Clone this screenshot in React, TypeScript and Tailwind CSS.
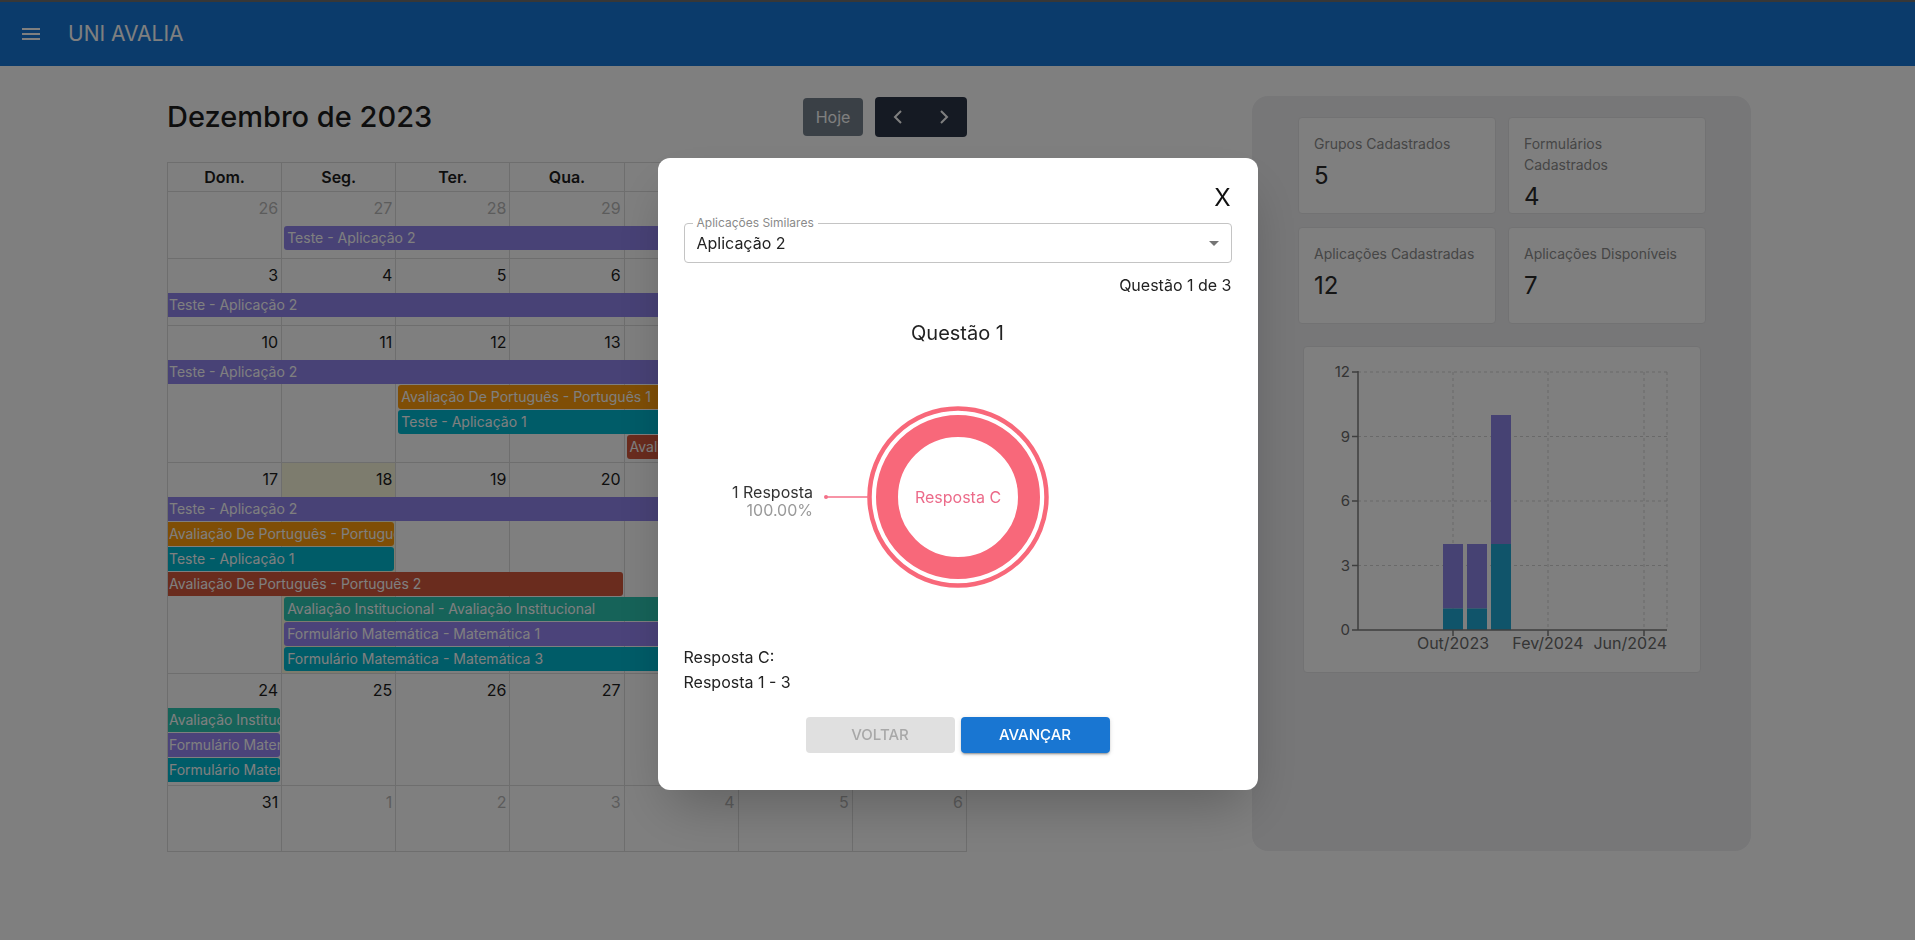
import React from "react";

type CalEvent = {
  title: string;
  color: string;
  start: number;
  end: number;
  row: number;
  head?: boolean;
  tail?: boolean;
};

type Week = {
  rows: string;
  days: { n: number; other?: boolean; today?: boolean }[];
  events: CalEvent[];
};

const PURPLE = "bg-[#9084ec]";
const PURPLE2 = "bg-[#9686f4]";
const ORANGE = "bg-[#ff9d0c]";
const CYAN = "bg-[#00b8d0]";
const RED = "bg-[#d4583c]";
const GREEN = "bg-[#2cc6b2]";

const colStart: Record<number, string> = {
  1: "col-start-1",
  2: "col-start-2",
  3: "col-start-3",
  4: "col-start-4",
  5: "col-start-5",
  6: "col-start-6",
  7: "col-start-7",
};
const colEnd: Record<number, string> = {
  2: "col-end-2",
  3: "col-end-3",
  4: "col-end-4",
  5: "col-end-5",
  6: "col-end-6",
  7: "col-end-7",
  8: "col-end-8",
};
const rowStart: Record<number, string> = {
  2: "row-start-2",
  3: "row-start-3",
  4: "row-start-4",
  5: "row-start-5",
  6: "row-start-6",
  7: "row-start-7",
  8: "row-start-8",
};

const weeks: Week[] = [
  {
    rows: "grid-rows-[34px_25px_1fr] h-[67px]",
    days: [
      { n: 26, other: true },
      { n: 27, other: true },
      { n: 28, other: true },
      { n: 29, other: true },
      { n: 30, other: true },
      { n: 1 },
      { n: 2 },
    ],
    events: [{ title: "Teste - Aplicação 2", color: PURPLE, start: 2, end: 8, row: 2, head: true }],
  },
  {
    rows: "grid-rows-[34px_25px_1fr] h-[67px]",
    days: [{ n: 3 }, { n: 4 }, { n: 5 }, { n: 6 }, { n: 7 }, { n: 8 }, { n: 9 }],
    events: [{ title: "Teste - Aplicação 2", color: PURPLE, start: 1, end: 8, row: 2 }],
  },
  {
    rows: "grid-rows-[34px_25px_25px_25px_25px_1fr] h-[137px]",
    days: [{ n: 10 }, { n: 11 }, { n: 12 }, { n: 13 }, { n: 14 }, { n: 15 }, { n: 16 }],
    events: [
      { title: "Teste - Aplicação 2", color: PURPLE, start: 1, end: 8, row: 2 },
      { title: "Avaliação De Português - Português 1", color: ORANGE, start: 3, end: 8, row: 3, head: true },
      { title: "Teste - Aplicação 1", color: CYAN, start: 3, end: 8, row: 4, head: true },
      { title: "Avaliação De Português - Português 2", color: RED, start: 5, end: 8, row: 5, head: true },
    ],
  },
  {
    rows: "grid-rows-[34px_25px_25px_25px_25px_25px_25px_25px_1fr] h-[211px]",
    days: [{ n: 17 }, { n: 18, today: true }, { n: 19 }, { n: 20 }, { n: 21 }, { n: 22 }, { n: 23 }],
    events: [
      { title: "Teste - Aplicação 2", color: PURPLE, start: 1, end: 8, row: 2 },
      { title: "Avaliação De Português - Português 1", color: ORANGE, start: 1, end: 3, row: 3, tail: true },
      { title: "Teste - Aplicação 1", color: CYAN, start: 1, end: 3, row: 4, tail: true },
      { title: "Avaliação De Português - Português 2", color: RED, start: 1, end: 5, row: 5, tail: true },
      { title: "Avaliação Institucional - Avaliação Institucional", color: GREEN, start: 2, end: 8, row: 6, head: true },
      { title: "Formulário Matemática - Matemática 1", color: PURPLE2, start: 2, end: 8, row: 7, head: true },
      { title: "Formulário Matemática - Matemática 3", color: CYAN, start: 2, end: 8, row: 8, head: true },
    ],
  },
  {
    rows: "grid-rows-[34px_25px_25px_25px_1fr] h-[112px]",
    days: [{ n: 24 }, { n: 25 }, { n: 26 }, { n: 27 }, { n: 28 }, { n: 29 }, { n: 30 }],
    events: [
      { title: "Avaliação Institucional - Avaliação Institucional", color: GREEN, start: 1, end: 2, row: 2, tail: true },
      { title: "Formulário Matemática - Matemática 1", color: PURPLE2, start: 1, end: 2, row: 3, tail: true },
      { title: "Formulário Matemática - Matemática 3", color: CYAN, start: 1, end: 2, row: 4, tail: true },
    ],
  },
  {
    rows: "grid-rows-[34px_1fr] h-[66px]",
    days: [
      { n: 31 },
      { n: 1, other: true },
      { n: 2, other: true },
      { n: 3, other: true },
      { n: 4, other: true },
      { n: 5, other: true },
      { n: 6, other: true },
    ],
    events: [],
  },
];

const weekDays = ["Dom.", "Seg.", "Ter.", "Qua.", "Qui.", "Sex.", "Sáb."];

function Calendar() {
  return (
    <section className="w-[800px]">
      <div className="h-[40px] flex items-center justify-between mb-[25px]">
        <h2 className="text-[29px] font-medium text-[#1c1c1c]">Dezembro de 2023</h2>
        <div className="flex items-center gap-[12px]">
          <button className="h-[38px] w-[60px] rounded-[4px] bg-[#2c3e50] opacity-65 text-white text-[16px]">Hoje</button>
          <div className="flex h-[40px] w-[92px] rounded-[4px] bg-[#2b3547] overflow-hidden">
            <button className="flex-1 flex items-center justify-center">
              <svg width="10" height="16" viewBox="0 0 10 16">
                <path d="M8 2 L2 8 L8 14" fill="none" stroke="#fff" strokeWidth="2" />
              </svg>
            </button>
            <button className="flex-1 flex items-center justify-center">
              <svg width="10" height="16" viewBox="0 0 10 16">
                <path d="M2 2 L8 8 L2 14" fill="none" stroke="#fff" strokeWidth="2" />
              </svg>
            </button>
          </div>
        </div>
      </div>

      <div className="border-l border-t border-[#dddddd]">
        <div className="grid grid-cols-7 h-[29px]">
          {weekDays.map((d) => (
            <div key={d} className="border-r border-b border-[#dddddd] flex items-center justify-center text-[16px] font-semibold text-[#1c1c1c]">
              {d}
            </div>
          ))}
        </div>
        {weeks.map((w, wi) => (
          <div key={wi} className={`grid grid-cols-7 ${w.rows}`}>
            {w.days.map((d, di) => (
              <div
                key={di}
                className={`${colStart[di + 1]} row-start-1 row-end-[-1] border-r border-b border-[#dddddd] ${d.today ? "bg-[#fbf8dc]" : ""}`}
              />
            ))}
            {w.days.map((d, di) => (
              <div
                key={"n" + di}
                className={`${colStart[di + 1]} row-start-1 text-right pr-[4px] pt-[4px] text-[16px] leading-[24px] ${d.other ? "text-[#b8b8b8]" : "text-[#1c1c1c]"}`}
              >
                {d.n}
              </div>
            ))}
            {w.events.map((e, ei) => (
              <div
                key={"e" + ei}
                className={`${colStart[e.start]} ${colEnd[e.end]} ${rowStart[e.row]} ${e.color} h-[24px] leading-[24px] text-[14px] text-white whitespace-nowrap overflow-hidden pl-[1px] ${e.head ? "ml-[2px] rounded-l-[3px] pl-[3px]" : ""} ${e.tail ? "mr-[2px] rounded-r-[3px]" : ""}`}
              >
                {e.title}
              </div>
            ))}
          </div>
        ))}
      </div>
    </section>
  );
}

function StatCard({ title, value }: { title: React.ReactNode; value: string }) {
  return (
    <div className="h-[97px] rounded-[4px] bg-white border border-[#e4e4e6] px-[15px] pt-[15px]">
      <div className="text-[14px] leading-[21px] whitespace-nowrap text-[#8c8c8c]">{title}</div>
      <div className="text-[24px] leading-[36px] mt-[4px] text-[#2a2a2a]">{value}</div>
    </div>
  );
}

function BarChart() {
  const y0 = 283;
  const unit = 21.5;
  const grid = "#d2d2d2";
  const axis = "#7c7c7c";
  const bars = [
    { x: 139, total: 4, low: 1 },
    { x: 163, total: 4, low: 1 },
    { x: 187, total: 10, low: 4 },
  ];
  return (
    <svg width="398" height="327" viewBox="0 0 398 327">
      {[3, 6, 9, 12].map((v) => (
        <line key={v} x1="54" x2="363" y1={y0 - v * unit} y2={y0 - v * unit} stroke={grid} strokeDasharray="3 3" />
      ))}
      {[149, 244, 340, 363].map((x) => (
        <line key={x} x1={x} x2={x} y1="25" y2={y0} stroke={grid} strokeDasharray="3 3" />
      ))}
      {bars.map((b) => (
        <g key={b.x}>
          <rect x={b.x} y={y0 - b.total * unit} width="20" height={(b.total - b.low) * unit} fill="#8c84e6" />
          <rect x={b.x} y={y0 - b.low * unit} width="20" height={b.low * unit} fill="#20a8d4" />
        </g>
      ))}
      <line x1="54" x2="54" y1="24" y2={y0} stroke={axis} strokeWidth="1.5" />
      <line x1="54" x2="363" y1={y0} y2={y0} stroke={axis} strokeWidth="1.5" />
      {[0, 3, 6, 9, 12].map((v) => (
        <g key={v}>
          <line x1="48" x2="54" y1={y0 - v * unit} y2={y0 - v * unit} stroke={axis} strokeWidth="1.5" />
          <text x="46" y={y0 - v * unit + 5} textAnchor="end" fontSize="15" fill="#6a6a6a">
            {v}
          </text>
        </g>
      ))}
      {[149, 244, 340].map((x) => (
        <line key={x} x1={x} x2={x} y1={y0} y2={y0 + 6} stroke={axis} strokeWidth="1.5" />
      ))}
      <text x="149" y="302" textAnchor="middle" fontSize="16" fill="#6a6a6a">Out/2023</text>
      <text x="244" y="302" textAnchor="middle" fontSize="16" fill="#6a6a6a">Fev/2024</text>
      <text x="363" y="302" textAnchor="end" fontSize="16" fill="#6a6a6a">Jun/2024</text>
    </svg>
  );
}

function SidePanel() {
  return (
    <aside className="ml-[285px] w-[499px] h-[755px] -mt-[1px] rounded-[16px] bg-[#eeeef1] pt-[21px] pl-[46px]">
      <div className="grid grid-cols-2 gap-x-[12px] gap-y-[13px] w-[408px]">
        <StatCard title="Grupos Cadastrados" value="5" />
        <StatCard
          title={
            <>
              Formulários
              <br />
              Cadastrados
            </>
          }
          value="4"
        />
        <StatCard title="Aplicações Cadastradas" value="12" />
        <StatCard title="Aplicações Disponíveis" value="7" />
      </div>
      <div className="mt-[22px] ml-[5px] w-[398px] h-[327px] rounded-[4px] bg-white border border-[#e4e4e6]">
        <BarChart />
      </div>
    </aside>
  );
}

function Donut() {
  return (
    <svg width="548" height="298" viewBox="0 0 548 298">
      <circle cx="274" cy="150" r="88.5" fill="none" stroke="#f8687a" strokeWidth="4.5" />
      <circle cx="274" cy="150" r="71" fill="none" stroke="#f8687a" strokeWidth="22" />
      <line x1="142" x2="185" y1="150" y2="150" stroke="#f47088" strokeWidth="1.5" />
      <circle cx="142" cy="150" r="2" fill="#f47088" />
      <text x="129" y="151" textAnchor="end" fontSize="16" fill="#333">1 Resposta</text>
      <text x="129" y="169" textAnchor="end" fontSize="16" fill="#9a9a9a">100.00%</text>
      <text x="274" y="156" textAnchor="middle" fontSize="16" fill="#ec6b8a">Resposta C</text>
    </svg>
  );
}

function Modal() {
  return (
    <div className="fixed inset-0 bg-black/50 flex items-center justify-center">
      <div className="mt-[8px] w-[600px] rounded-[12px] bg-white shadow-2xl px-[26px] pt-[24px] pb-[37px]">
        <div className="h-[32px] flex items-center justify-end">
          <button className="text-[24px] leading-none text-[#111] mr-[1px]">X</button>
        </div>
        <div className="mt-[9px] relative h-[40px] rounded-[4px] border border-[#c4c4c4] flex items-center justify-between pl-[12px] pr-[5px]">
          <span className="absolute -top-[9px] left-[8px] bg-white px-[4px] text-[12px] leading-[16px] text-[#8a8a8a]">
            Aplicações Similares
          </span>
          <span className="text-[16px] text-[#222]">Aplicação 2</span>
          <svg width="24" height="24" viewBox="0 0 24 24">
            <path d="M7 10l5 5 5-5z" fill="#757575" />
          </svg>
        </div>
        <div className="mt-[10px] text-right text-[16px] leading-[24px] text-[#222]">Questão 1 de 3</div>
        <div className="mt-[22px] text-center text-[20px] leading-[28px] text-[#222]">Questão 1</div>
        <Donut />
        <div className="text-[16px] leading-[25px] text-[#222]">
          <div>Resposta C:</div>
          <div>Resposta 1 - 3</div>
        </div>
        <div className="mt-[22px] flex justify-center gap-[6px]">
          <button className="w-[149px] h-[36px] rounded-[4px] bg-[#e0e0e0] text-[15px] font-medium text-[#a8a8a8]">VOLTAR</button>
          <button className="w-[149px] h-[36px] rounded-[4px] bg-[#1976d2] text-[15px] font-medium text-white shadow-[0_3px_1px_-2px_rgba(0,0,0,0.2),0_2px_2px_0_rgba(0,0,0,0.14),0_1px_5px_0_rgba(0,0,0,0.12)]">
            AVANÇAR
          </button>
        </div>
      </div>
    </div>
  );
}

export default function App() {
  return (
    <div className="min-h-screen bg-white font-[family-name:Inter,sans-serif] relative">
      <header className="h-[66px] border-t-2 border-[#6e6e6e] bg-[#1677d6] flex items-center pl-[22px] gap-[28px] text-white">
        <svg width="18" height="12" viewBox="0 0 18 12">
          <rect x="0" y="0" width="18" height="2" fill="#fff" />
          <rect x="0" y="5" width="18" height="2" fill="#fff" />
          <rect x="0" y="10" width="18" height="2" fill="#fff" />
        </svg>
        <span className="text-[21px]">UNI AVALIA</span>
      </header>
      <main className="flex pl-[167px] pt-[31px]">
        <Calendar />
        <SidePanel />
      </main>
      <Modal />
    </div>
  );
}
